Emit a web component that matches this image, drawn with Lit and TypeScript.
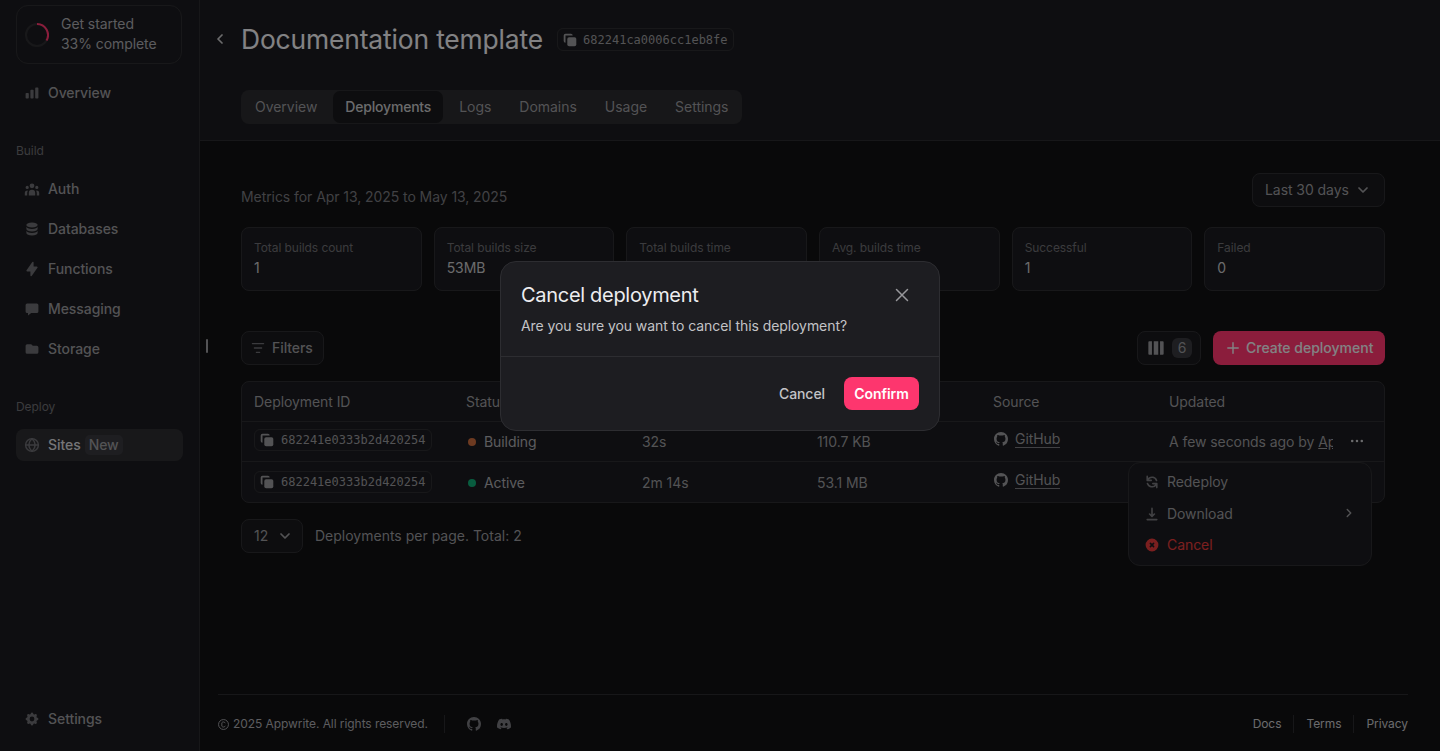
import { LitElement, html, css, svg } from 'lit';
import { customElement } from 'lit/decorators.js';

const ICONS = {
  chart: svg`<path d="M2 11a1 1 0 011-1h2a1 1 0 011 1v5a1 1 0 01-1 1H3a1 1 0 01-1-1v-5zM8 7a1 1 0 011-1h2a1 1 0 011 1v9a1 1 0 01-1 1H9a1 1 0 01-1-1V7zM14 4a1 1 0 011-1h2a1 1 0 011 1v12a1 1 0 01-1 1h-2a1 1 0 01-1-1V4z"/>`,
  users: svg`<path d="M13 6a3 3 0 11-6 0 3 3 0 016 0zM18 8a2 2 0 11-4 0 2 2 0 014 0zM14 15a4 4 0 00-8 0v3h8v-3zM6 8a2 2 0 11-4 0 2 2 0 014 0zM16 18v-3a5.972 5.972 0 00-.75-2.906A3.005 3.005 0 0119 15v3h-3zM4.75 12.094A5.973 5.973 0 004 15v3H1v-3a3 3 0 013.75-2.906z"/>`,
  database: svg`<path d="M3 12v3c0 1.657 3.134 3 7 3s7-1.343 7-3v-3c0 1.657-3.134 3-7 3s-7-1.343-7-3z"/><path d="M3 7v3c0 1.657 3.134 3 7 3s7-1.343 7-3V7c0 1.657-3.134 3-7 3S3 8.657 3 7z"/><path d="M17 5c0 1.657-3.134 3-7 3S3 6.657 3 5s3.134-3 7-3 7 1.343 7 3z"/>`,
  bolt: svg`<path d="M11.3 1.046A1 1 0 0112 2v5h4a1 1 0 01.82 1.573l-7 10A1 1 0 018 18v-5H4a1 1 0 01-.82-1.573l7-10a1 1 0 011.12-.38z"/>`,
  chat: svg`<path d="M2 5a2 2 0 012-2h12a2 2 0 012 2v8a2 2 0 01-2 2H9l-4 3v-3H4a2 2 0 01-2-2V5z"/>`,
  folder: svg`<path d="M2 6a2 2 0 012-2h5l2 2h5a2 2 0 012 2v6a2 2 0 01-2 2H4a2 2 0 01-2-2V6z"/>`,
  globe: svg`<g fill="none" stroke="currentColor" stroke-width="1.8"><circle cx="10" cy="10" r="8"/><path d="M2 10h16M10 2c-5 5-5 11 0 16M10 2c5 5 5 11 0 16"/></g>`,
  cog: svg`<path fill-rule="evenodd" d="M11.49 3.17c-.38-1.56-2.6-1.56-2.98 0a1.532 1.532 0 01-2.286.948c-1.372-.836-2.942.734-2.106 2.106.54.886.061 2.042-.947 2.287-1.561.379-1.561 2.6 0 2.978a1.532 1.532 0 01.947 2.287c-.836 1.372.734 2.942 2.106 2.106a1.532 1.532 0 012.287.947c.379 1.561 2.6 1.561 2.978 0a1.533 1.533 0 012.287-.947c1.372.836 2.942-.734 2.106-2.106a1.533 1.533 0 01.947-2.287c1.561-.379 1.561-2.6 0-2.978a1.532 1.532 0 01-.947-2.287c.836-1.372-.734-2.942-2.106-2.106a1.532 1.532 0 01-2.287-.947zM10 13a3 3 0 100-6 3 3 0 000 6z"/>`,
  copy: svg`<path d="M7 9a2 2 0 012-2h6a2 2 0 012 2v6a2 2 0 01-2 2H9a2 2 0 01-2-2V9z"/><path d="M5 3a2 2 0 00-2 2v6a2 2 0 002 2V5h8a2 2 0 00-2-2H5z"/>`,
  down: svg`<path d="M5 7.5l5 5 5-5" fill="none" stroke="currentColor" stroke-width="2.2" stroke-linecap="round" stroke-linejoin="round"/>`,
  left: svg`<path d="M12.5 5l-5 5 5 5" fill="none" stroke="currentColor" stroke-width="2.2" stroke-linecap="round" stroke-linejoin="round"/>`,
  right: svg`<path d="M7.5 5l5 5-5 5" fill="none" stroke="currentColor" stroke-width="2" stroke-linecap="round" stroke-linejoin="round"/>`,
  filter: svg`<path d="M3 4.5h14M5.5 10h9M8 15.5h4" fill="none" stroke="currentColor" stroke-width="1.6" stroke-linecap="round"/>`,
  columns: svg`<path d="M1.5 3.5a1 1 0 011-1h3v15h-3a1 1 0 01-1-1zM7.5 2.5h5v15h-5zM14.5 2.5h3a1 1 0 011 1v13a1 1 0 01-1 1h-3z"/>`,
  plus: svg`<path d="M10 3.5v13M3.5 10h13" fill="none" stroke="currentColor" stroke-width="1.8" stroke-linecap="round"/>`,
  dots: svg`<circle cx="4" cy="10" r="1.6"/><circle cx="10" cy="10" r="1.6"/><circle cx="16" cy="10" r="1.6"/>`,
  refresh: svg`<path fill-rule="evenodd" d="M4 2a1 1 0 011 1v2.101a7.002 7.002 0 0111.601 2.566 1 1 0 11-1.885.666A5.002 5.002 0 005.999 7H9a1 1 0 010 2H4a1 1 0 01-1-1V3a1 1 0 011-1zm.008 9.057a1 1 0 011.276.61A5.002 5.002 0 0014.001 13H11a1 1 0 110-2h5a1 1 0 011 1v5a1 1 0 11-2 0v-2.101a7.002 7.002 0 01-11.601-2.566 1 1 0 01.61-1.276z"/>`,
  download: svg`<path fill-rule="evenodd" d="M3 17a1 1 0 011-1h12a1 1 0 110 2H4a1 1 0 01-1-1zm3.293-7.707a1 1 0 011.414 0L9 10.586V3a1 1 0 112 0v7.586l1.293-1.293a1 1 0 111.414 1.414l-3 3a1 1 0 01-1.414 0l-3-3a1 1 0 010-1.414z"/>`,
  xcircle: svg`<path fill-rule="evenodd" d="M10 18a8 8 0 100-16 8 8 0 000 16zM8.707 7.293a1 1 0 00-1.414 1.414L8.586 10l-1.293 1.293a1 1 0 101.414 1.414L10 11.414l1.293 1.293a1 1 0 001.414-1.414L11.414 10l1.293-1.293a1 1 0 00-1.414-1.414L10 8.586 8.707 7.293z"/>`,
  close: svg`<path d="M4.5 4.5l11 11M15.5 4.5l-11 11" fill="none" stroke="currentColor" stroke-width="1.5" stroke-linecap="round"/>`,
  github: svg`<path transform="scale(1.25)" d="M8 0C3.58 0 0 3.58 0 8c0 3.54 2.29 6.53 5.47 7.59.4.07.55-.17.55-.38 0-.19-.01-.82-.01-1.49-2.01.37-2.53-.49-2.69-.94-.09-.23-.48-.94-.82-1.13-.28-.15-.68-.52-.01-.53.63-.01 1.08.58 1.23.82.72 1.21 1.87.87 2.33.66.07-.52.28-.87.51-1.07-1.78-.2-3.64-.89-3.64-3.95 0-.87.31-1.59.82-2.15-.08-.2-.36-1.02.08-2.12 0 0 .67-.21 2.2.82.64-.18 1.32-.27 2-.27.68 0 1.36.09 2 .27 1.53-1.04 2.2-.82 2.2-.82.44 1.1.16 1.92.08 2.12.51.56.82 1.27.82 2.15 0 3.07-1.87 3.75-3.65 3.95.29.25.54.73.54 1.48 0 1.07-.01 1.93-.01 2.2 0 .21.15.46.55.38A8.013 8.013 0 0016 8c0-4.42-3.58-8-8-8z"/>`,
  discord: svg`<path transform="scale(.8333)" d="M20.317 4.3698a19.7913 19.7913 0 00-4.8851-1.5152.0741.0741 0 00-.0785.0371c-.211.3753-.4447.8648-.6083 1.2495-1.8447-.2762-3.68-.2762-5.4868 0-.1636-.3933-.4058-.8742-.6177-1.2495a.077.077 0 00-.0785-.037 19.7363 19.7363 0 00-4.8852 1.515.0699.0699 0 00-.0321.0277C.5334 9.0458-.319 13.5799.0992 18.0578a.0824.0824 0 00.0312.0561c2.0528 1.5076 4.0413 2.4228 5.9929 3.0294a.0777.0777 0 00.0842-.0276c.4616-.6304.8731-1.2952 1.226-1.9942a.076.076 0 00-.0416-.1057c-.6528-.2476-1.2743-.5495-1.8722-.8923a.077.077 0 01-.0076-.1277c.1258-.0943.2517-.1923.3718-.2914a.0743.0743 0 01.0776-.0105c3.9278 1.7933 8.18 1.7933 12.0614 0a.0739.0739 0 01.0785.0095c.1202.099.246.1981.3728.2924a.077.077 0 01-.0066.1276 12.2986 12.2986 0 01-1.873.8914.0766.0766 0 00-.0407.1067c.3604.698.7719 1.3628 1.225 1.9932a.076.076 0 00.0842.0286c1.961-.6067 3.9495-1.5219 6.0023-3.0294a.077.077 0 00.0313-.0552c.5004-5.177-.8382-9.6739-3.5485-13.6604a.061.061 0 00-.0312-.0286zM8.02 15.3312c-1.1825 0-2.1569-1.0857-2.1569-2.419 0-1.3332.9555-2.4189 2.157-2.4189 1.2108 0 2.1757 1.0952 2.1568 2.419 0 1.3332-.9555 2.4189-2.1569 2.4189zm7.9748 0c-1.1825 0-2.1569-1.0857-2.1569-2.419 0-1.3332.9554-2.4189 2.1569-2.4189 1.2108 0 2.1757 1.0952 2.1568 2.419 0 1.3332-.946 2.4189-2.1568 2.4189z"/>`,
  copyright: svg`<g fill="none" stroke="currentColor" stroke-width="1.6"><circle cx="10" cy="10" r="9"/><path d="M13.2 7.6A3.6 3.6 0 007 6.8v6.4a3.6 3.6 0 006.2-.8"/></g>`,
};

const icon = (name: keyof typeof ICONS, size = 16) => html`<svg
  class="icon"
  width=${size}
  height=${size}
  viewBox="0 0 20 20"
  fill="currentColor"
  aria-hidden="true"
>${ICONS[name]}</svg>`;

const BUILD_NAV: [keyof typeof ICONS, string][] = [
  ['users', 'Auth'],
  ['database', 'Databases'],
  ['bolt', 'Functions'],
  ['chat', 'Messaging'],
  ['folder', 'Storage'],
];

const TABS = ['Overview', 'Deployments', 'Logs', 'Domains', 'Usage', 'Settings'];

const STATS = [
  ['Total builds count', '1'],
  ['Total builds size', '53MB'],
  ['Total builds time', '2m 14s'],
  ['Avg. builds time', '2m 14s'],
  ['Successful', '1'],
  ['Failed', '0'],
];

const ROWS = [
  { status: 'Building', dot: 'building', duration: '32s', size: '110.7 KB' },
  { status: 'Active', dot: 'active', duration: '2m 14s', size: '53.1 MB' },
];

@customElement('app-root')
export class AppRoot extends LitElement {
  static styles = css`
    :host {
      display: block;
      position: relative;
      height: 100vh;
      overflow: hidden;
      font-family: Inter, 'Noto Sans', sans-serif;
      font-size: 14px;
      line-height: 20px;
      letter-spacing: -0.07px;
      color: #c3c3c6;
      background: #111113;
    }
    .icon {
      display: block;
      flex: none;
    }
    .mono {
      font-family: 'DejaVu Sans Mono', 'Liberation Mono', monospace;
      font-size: 12px;
      letter-spacing: 0;
    }
    .layout {
      display: flex;
      height: 100%;
    }

    /* sidebar */
    .sidebar {
      box-sizing: border-box;
      width: 200px;
      flex: none;
      display: flex;
      flex-direction: column;
      padding: 5px 16px 16px;
      background: #1b1b1f;
      border-right: 1px solid #2a2a2e;
    }
    .progress {
      box-sizing: border-box;
      display: flex;
      align-items: center;
      gap: 12px;
      width: 166px;
      height: 59px;
      padding-left: 8px;
      border: 1px solid #2d2d31;
      border-radius: 12px;
      color: #a8a8ad;
      margin-bottom: 13px;
    }
    .progress-text {
      padding-bottom: 2px;
    }
    .nav-item {
      display: flex;
      align-items: center;
      gap: 8px;
      height: 32px;
      padding-left: 8px;
      color: #97979b;
      font-weight: 500;
    }
    .nav-item .icon {
      color: #6c6c71;
    }
    .nav-list {
      display: flex;
      flex-direction: column;
      gap: 8px;
    }
    .nav-label {
      height: 18px;
      line-height: 18px;
      font-size: 12px;
      color: #6c6c71;
      margin: 33px 0 13px;
    }
    .nav-item.active {
      width: 159px;
      background: #2d2d31;
      border-radius: 8px;
      color: #d6d6d9;
      font-weight: 500;
    }
    .badge {
      margin-left: -4px;
      padding: 0 4px;
      border-radius: 5px;
      background: #38383d;
      color: #97979b;
      font-weight: 500;
    }
    .settings-link {
      margin-top: auto;
    }
    .handle {
      position: absolute;
      left: 206px;
      top: 339px;
      width: 2px;
      height: 14px;
      background: #97979b;
      border-radius: 1px;
    }

    /* main */
    .main {
      flex: 1;
      min-width: 0;
      display: flex;
      flex-direction: column;
    }
    .page-header {
      box-sizing: border-box;
      height: 141px;
      flex: none;
      padding: 20px 0 0 12px;
      background: #1b1b1f;
      border-bottom: 1px solid #2a2a2e;
    }
    .title-row {
      display: flex;
      align-items: center;
      height: 38px;
      color: #ededf0;
    }
    .title-row .back {
      color: #c3c3c6;
      margin-right: 13px;
    }
    h1 {
      margin: 0 14px 0 0;
      font-size: 26.4px;
      line-height: 38px;
      font-weight: 400;
      letter-spacing: -0.14px;
      white-space: nowrap;
    }
    .id-pill {
      box-sizing: border-box;
      display: inline-flex;
      align-items: center;
      gap: 4px;
      height: 23px;
      margin-top: 1px;
      padding: 0 5px 0 3px;
      border: 1px solid #2d2d31;
      border-radius: 6px;
      color: #97979b;
      white-space: nowrap;
    }
    .id-pill .icon {
      color: #97979b;
    }
    .tabs {
      display: inline-flex;
      box-sizing: border-box;
      gap: 4px;
      height: 34px;
      padding: 1px 2px;
      margin: 32px 0 0 29px;
      background: #2a2a2e;
      border-radius: 8px;
      letter-spacing: -0.03px;
    }
    .tab {
      padding: 0 12px;
      line-height: 32px;
      border-radius: 7px;
      color: #97979b;
    }
    .tab.active {
      background: #19191c;
      color: #c3c3c6;
      font-weight: 500;
      letter-spacing: -0.2px;
    }
    .content {
      flex: 1;
      padding: 32px 55px 0 41px;
    }
    .row-between {
      display: flex;
      align-items: center;
      justify-content: space-between;
    }
    .row-between.metrics-row {
      align-items: flex-end;
    }
    .metrics {
      color: #77777c;
    }
    .control {
      box-sizing: border-box;
      display: inline-flex;
      align-items: center;
      height: 34px;
      padding: 0 12px;
      border: 1px solid #2d2d31;
      border-radius: 8px;
      background: #19191c;
      color: #97979b;
      white-space: nowrap;
    }
    .range {
      width: 133px;
      gap: 6px;
    }
    .stats {
      display: grid;
      grid-template-columns: repeat(6, 1fr);
      gap: 12px;
      margin: 20px 0 40px;
    }
    .stat {
      box-sizing: border-box;
      height: 64px;
      padding: 10px 12px;
      border: 1px solid #2d2d31;
      border-radius: 8px;
      background: #1b1b1f;
    }
    .stat-label {
      font-size: 12px;
      color: #6c6c71;
    }
    .stat-value {
      color: #c3c3c6;
    }
    .filters {
      gap: 6px;
      padding: 0 10px 0 8px;
      font-weight: 500;
    }
    .filters .icon {
      color: #6c6c71;
    }
    .toolbar-right {
      display: flex;
      gap: 12px;
    }
    .view-columns {
      padding: 0 8px 0 9px;
      gap: 7px;
      color: #97979b;
    }
    .count {
      width: 20px;
      line-height: 20px;
      text-align: center;
      border-radius: 6px;
      background: #38383d;
    }
    .create {
      box-sizing: border-box;
      display: inline-flex;
      align-items: center;
      gap: 5px;
      height: 34px;
      width: 172px;
      padding-left: 12px;
      border-radius: 8px;
      background: #fd366e;
      color: #ededf0;
      font-weight: 500;
      letter-spacing: 0;
      white-space: nowrap;
    }

    /* table */
    .table {
      margin-top: 16px;
      border: 1px solid #2d2d31;
      border-radius: 8px;
      background: #1b1b1f;
    }
    .tr {
      box-sizing: border-box;
      display: grid;
      grid-template-columns: 212px 176px 175px 176px 176px 1fr;
      align-items: center;
      height: 40px;
      border-bottom: 1px solid #2d2d31;
    }
    .tr:last-child {
      border-bottom: 0;
      padding-top: 2px;
    }
    .tr > div {
      padding: 0 12px;
      min-width: 0;
    }
    .th,
    .td {
      color: #97979b;
    }
    .id-pill.cell {
      height: 22px;
      margin: 0;
      gap: 5px;
      padding: 0 5px 0 3px;
    }
    .tr > .status {
      display: flex;
      align-items: center;
      gap: 8px;
      padding-left: 14px;
      color: #a8a8ad;
    }
    .dot {
      width: 8px;
      height: 8px;
      border-radius: 50%;
    }
    .dot.building {
      background: #c76a3c;
    }
    .dot.active {
      background: #10a873;
    }
    .source {
      display: flex;
      align-items: center;
      gap: 7px;
      margin: -6px 0 0 1px;
    }
    .source .icon {
      color: #97979b;
    }
    .link {
      border-bottom: 1px solid #77777c;
      line-height: 17px;
    }
    .updated {
      display: flex;
      align-items: center;
      justify-content: space-between;
    }
    .updated-text {
      width: 164px;
      overflow: hidden;
      white-space: nowrap;
    }
    .updated-text span {
      text-decoration: underline;
    }
    .more {
      color: #c3c3c6;
      margin: -2px 7px 0 0;
    }

    /* pagination */
    .pager {
      margin-top: 16px;
    }
    .pager-left {
      display: flex;
      align-items: center;
      gap: 12px;
      color: #97979b;
      letter-spacing: 0;
    }
    .size {
      width: 62px;
      gap: 9px;
    }
    .next {
      display: flex;
      align-items: center;
      color: #97979b;
      margin-right: 8px;
    }
    .menu {
      box-sizing: border-box;
      position: absolute;
      left: 1128px;
      top: 462px;
      width: 244px;
      height: 104px;
      padding: 3px 15px;
      border: 1px solid #2d2d31;
      border-radius: 12px;
      background: #1b1b1f;
    }
    .menu-item {
      display: flex;
      align-items: center;
      gap: 7px;
      height: 32px;
      color: #97979b;
    }
    .menu-item > .icon {
      color: #77777c;
    }
    .menu-item .chev {
      margin: -2px 0 0 auto;
      color: #97979b;
    }
    .menu-item.danger {
      height: 30px;
    }
    .menu-item.danger,
    .menu-item.danger > .icon {
      color: #e03a3a;
    }

    /* footer */
    .footer {
      box-sizing: border-box;
      display: flex;
      align-items: center;
      justify-content: space-between;
      height: 57px;
      flex: none;
      margin: 0 32px 0 18px;
      padding-top: 2px;
      border-top: 1px solid #2a2a2e;
      font-size: 12px;
      color: #a8a8ad;
    }
    .foot-left,
    .foot-right {
      display: flex;
      align-items: center;
    }
    .copyright {
      display: flex;
      align-items: center;
      gap: 4px;
      padding-right: 16px;
      margin-right: 22px;
      border-right: 1px solid #2a2a2e;
      line-height: 18px;
    }
    .socials {
      display: flex;
      gap: 16px;
      color: #77777c;
    }
    .foot-right a {
      padding: 0 12px;
      border-left: 1px solid #2a2a2e;
      color: #c3c3c6;
      line-height: 18px;
    }
    .foot-right a:first-child {
      border-left: 0;
    }
    .foot-right a:last-child {
      padding-right: 0;
    }

    /* modal */
    .scrim {
      position: absolute;
      inset: 0;
      background: rgba(0, 0, 0, 0.45);
      display: flex;
      justify-content: center;
      align-items: flex-start;
      padding-top: 261px;
    }
    .modal {
      box-sizing: border-box;
      width: 440px;
      height: 170px;
      border: 1px solid #2d2d31;
      border-radius: 16px;
      background: #1d1d21;
      color: #c3c3c6;
    }
    .modal-head {
      box-sizing: border-box;
      height: 95px;
      padding: 19px 20px 0;
      border-bottom: 1px solid #2d2d31;
    }
    .modal-title {
      display: flex;
      align-items: center;
      justify-content: space-between;
      height: 28px;
      margin-bottom: 7px;
      font-size: 20px;
      line-height: 28px;
      letter-spacing: -0.3px;
      color: #ededf0;
    }
    .modal-title .icon {
      color: #97979b;
      margin-right: 7px;
    }
    .modal-foot {
      display: flex;
      align-items: center;
      justify-content: flex-end;
      gap: 8px;
      padding: 20px 20px 0;
    }
    .btn-text {
      padding: 0 11px;
      font-weight: 500;
      color: #c3c3c6;
    }
    .btn-confirm {
      box-sizing: border-box;
      width: 75px;
      height: 33px;
      line-height: 33px;
      text-align: center;
      border-radius: 8px;
      background: #fd366e;
      color: #fff;
      font-weight: 600;
    }
  `;

  private renderRing() {
    return html`<svg width="24" height="24" viewBox="0 0 24 24" fill="none" class="icon">
      <circle cx="12" cy="12" r="11" stroke="#2d2d31" stroke-width="2" />
      <path d="M12 1A11 11 0 0 1 21.5 17.5" stroke="#fd366e" stroke-width="2" />
    </svg>`;
  }

  private renderSidebar() {
    return html`<aside class="sidebar">
      <div class="progress">
        ${this.renderRing()}
        <div class="progress-text">Get started<br />33% complete</div>
      </div>
      <div class="nav-item">${icon('chart')}Overview</div>
      <div class="nav-label">Build</div>
      <div class="nav-list">
        ${BUILD_NAV.map(([i, label]) => html`<div class="nav-item">${icon(i)}${label}</div>`)}
      </div>
      <div class="nav-label">Deploy</div>
      <div class="nav-item active">${icon('globe')}Sites <span class="badge">New</span></div>
      <div class="nav-item settings-link">${icon('cog')}Settings</div>
    </aside>`;
  }

  private renderHeader() {
    return html`<header class="page-header">
      <div class="title-row">
        <span class="back">${icon('left')}</span>
        <h1>Documentation template</h1>
        <span class="id-pill mono">${icon('copy', 18)}682241ca0006cc1eb8fe</span>
      </div>
      <div class="tabs">
        ${TABS.map((t) => html`<div class="tab ${t === 'Deployments' ? 'active' : ''}">${t}</div>`)}
      </div>
    </header>`;
  }

  private renderTable() {
    return html`<div class="table">
      <div class="tr th">
        <div>Deployment ID</div>
        <div>Status</div>
        <div>Duration</div>
        <div>Size</div>
        <div>Source</div>
        <div>Updated</div>
      </div>
      ${ROWS.map(
        (r) => html`<div class="tr td">
          <div><span class="id-pill cell mono">${icon('copy', 18)}682241e0333b2d420254</span></div>
          <div class="status"><span class="dot ${r.dot}"></span>${r.status}</div>
          <div>${r.duration}</div>
          <div>${r.size}</div>
          <div><span class="source">${icon('github', 14)}<span class="link">GitHub</span></span></div>
          <div class="updated">
            <div class="updated-text">A few seconds ago by <span>Appwrite</span></div>
            <span class="more">${icon('dots')}</span>
          </div>
        </div>`
      )}
    </div>`;
  }

  private renderFooter() {
    return html`<footer class="footer">
      <div class="foot-left">
        <div class="copyright">${icon('copyright', 11)}2025 Appwrite. All rights reserved.</div>
        <div class="socials">${icon('github', 14)}${icon('discord', 14)}</div>
      </div>
      <div class="foot-right"><a>Docs</a><a>Terms</a><a>Privacy</a></div>
    </footer>`;
  }

  render() {
    return html`
      <div class="layout">
        ${this.renderSidebar()}
        <main class="main">
          ${this.renderHeader()}
          <div class="content">
            <div class="row-between metrics-row">
              <div class="metrics">Metrics for Apr 13, 2025 to May 13, 2025</div>
              <div class="control range">Last 30 days ${icon('down')}</div>
            </div>
            <div class="stats">
              ${STATS.map(
                ([label, value]) => html`<div class="stat">
                  <div class="stat-label">${label}</div>
                  <div class="stat-value">${value}</div>
                </div>`
              )}
            </div>
            <div class="row-between">
              <div class="control filters">${icon('filter')}Filters</div>
              <div class="toolbar-right">
                <div class="control view-columns">${icon('columns', 18)}<span class="count">6</span></div>
                <div class="create">${icon('plus')}Create deployment</div>
              </div>
            </div>
            ${this.renderTable()}
            <div class="row-between pager">
              <div class="pager-left">
                <div class="control size">12 ${icon('down')}</div>
                <span>Deployments per page. Total: 2</span>
              </div>
              <div class="next">Next ${icon('right')}</div>
            </div>
          </div>
          ${this.renderFooter()}
        </main>
      </div>
      <div class="handle"></div>
      <div class="menu">
        <div class="menu-item">${icon('refresh')}Redeploy</div>
        <div class="menu-item">${icon('download')}Download<span class="chev">${icon('right', 14)}</span></div>
        <div class="menu-item danger">${icon('xcircle')}Cancel</div>
      </div>
      <div class="scrim">
        <div class="modal">
          <div class="modal-head">
            <div class="modal-title">Cancel deployment ${icon('close', 20)}</div>
            <div>Are you sure you want to cancel this deployment?</div>
          </div>
          <div class="modal-foot">
            <span class="btn-text">Cancel</span>
            <span class="btn-confirm">Confirm</span>
          </div>
        </div>
      </div>
    `;
  }
}
